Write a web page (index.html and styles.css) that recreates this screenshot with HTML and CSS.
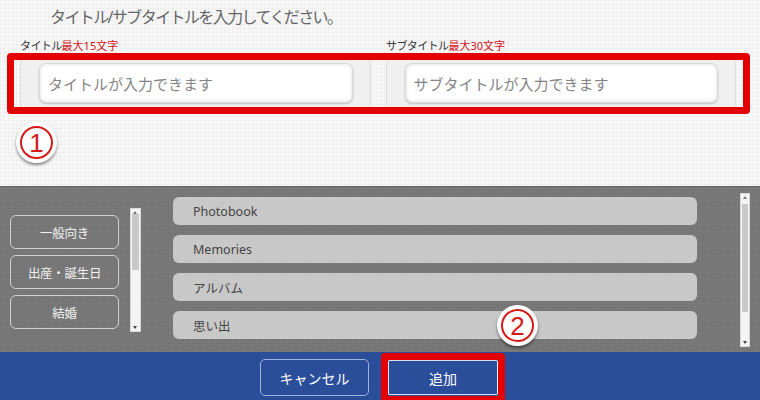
FILE: index.html
```html
<!DOCTYPE html>
<html lang="ja">
<head>
    <meta charset="UTF-8">
    <title>タイトル入力</title>
    <link rel="stylesheet" href="styles.css">
</head>
<body>
    <div class="top">
        <h1 class="heading">タイトル/サブタイトルを入力してください。</h1>
        <div class="labels">
            <p class="label label-first">タイトル<span class="limit">最大15文字</span></p>
            <p class="label">サブタイトル<span class="limit">最大30文字</span></p>
        </div>
        <div class="fields">
            <div class="field-panel">
                <input class="field" type="text" placeholder="タイトルが入力できます">
            </div>
            <div class="field-panel">
                <input class="field" type="text" placeholder="サブタイトルが入力できます">
            </div>
        </div>
        <div class="step step-one"><span class="step-ring">1</span></div>
    </div>

    <div class="picker">
        <div class="categories">
            <div class="category">一般向き</div>
            <div class="category">出産・誕生日</div>
            <div class="category">結婚</div>
        </div>
        <div class="scrollbar scrollbar-left">
            <span class="arrow arrow-up"></span>
            <span class="thumb"></span>
            <span class="arrow arrow-down"></span>
        </div>

        <ul class="titles">
            <li class="title-item">Photobook</li>
            <li class="title-item">Memories</li>
            <li class="title-item">アルバム</li>
            <li class="title-item">思い出</li>
        </ul>
        <div class="scrollbar scrollbar-right">
            <span class="arrow arrow-up"></span>
            <span class="thumb"></span>
            <span class="arrow arrow-down"></span>
        </div>

        <div class="step step-two"><span class="step-ring">2</span></div>
    </div>

    <div class="footer">
        <button class="btn btn-cancel">キャンセル</button>
        <div class="highlight">
            <button class="btn btn-add">追加</button>
        </div>
    </div>
</body>
</html>
```

FILE: styles.css
```css
* {
    margin: 0;
    padding: 0;
    box-sizing: border-box;
}

body {
    width: 760px;
    height: 400px;
    overflow: hidden;
    font-family: "Noto Sans", "Noto Sans CJK JP", sans-serif;
    background: #f6f6f6;
}

/* input area */
.top {
    position: relative;
    height: 186px;
    background-color: #f7f7f7;
    background-image:
        linear-gradient(to right, rgba(0, 0, 0, 0.025) 1px, transparent 1px),
        linear-gradient(to bottom, rgba(0, 0, 0, 0.025) 1px, transparent 1px);
    background-size: 4px 4px;
}

.heading {
    padding: 7px 0 0 50px;
    font-size: 16px;
    line-height: 20px;
    font-weight: normal;
    letter-spacing: -1.6px;
    color: #666;
}

.labels {
    display: flex;
    margin-top: 12px;
    padding-left: 20px;
}

.label {
    font-size: 11px;
    line-height: 14px;
    letter-spacing: -0.6px;
    color: #333;
}

.label-first {
    width: 366px;
}

.limit {
    color: #d3141b;
    letter-spacing: 0;
}

.fields {
    display: flex;
    gap: 15px;
    width: 743px;
    height: 61px;
    margin-left: 7px;
    padding: 0 7px 0 6px;
    border: 7px solid #e20000;
    border-radius: 4px;
}

.field-panel {
    flex: 1;
    padding: 3px 17px 4px 18px;
    background: #f0f0f0;
    border: 1px solid #dcdcdc;
    border-top: none;
    border-bottom: none;
    border-radius: 3px;
}

.field {
    width: 100%;
    height: 100%;
    padding: 0 8px;
    font-family: "Noto Sans CJK JP", sans-serif;
    font-size: 15px;
    color: #333;
    background: #fff;
    border: 1px solid #d8d8d8;
    border-radius: 7px;
    box-shadow: inset 0 0 4px rgba(0, 0, 0, 0.12), 0 1px 2px rgba(0, 0, 0, 0.2);
    outline: none;
}

.field::placeholder {
    color: #858585;
}

/* numbered markers */
.step {
    position: absolute;
    width: 41px;
    height: 41px;
    display: flex;
    align-items: center;
    justify-content: center;
    background: #fff;
    border-radius: 50%;
    box-shadow: 0 2px 3px rgba(0, 0, 0, 0.45);
    z-index: 5;
}

.step-one {
    left: 16px;
    top: 122px;
}

.step-two {
    left: 497px;
    top: 118px;
}

.step-ring {
    width: 33px;
    height: 33px;
    display: flex;
    align-items: center;
    justify-content: center;
    border: 2px solid #d61a1a;
    border-radius: 50%;
    font-family: "Liberation Sans", sans-serif;
    font-size: 26px;
    line-height: 1;
    color: #d61a1a;
}

/* picker */
.picker {
    position: relative;
    display: flex;
    align-items: flex-start;
    height: 166px;
    border-top: 1px solid #666;
    background-color: #7a7a7a;
    background-image:
        linear-gradient(to right, rgba(0, 0, 0, 0.03) 1px, transparent 1px),
        linear-gradient(to bottom, rgba(0, 0, 0, 0.03) 1px, transparent 1px);
    background-size: 3px 3px;
}

.categories {
    display: flex;
    flex-direction: column;
    gap: 6px;
    width: 109px;
    margin: 28px 0 0 10px;
}

.category {
    height: 34px;
    display: flex;
    align-items: center;
    justify-content: center;
    font-family: "Noto Sans CJK JP", sans-serif;
    font-size: 12.5px;
    letter-spacing: -0.3px;
    color: #f0f0f0;
    border: 1px solid #d0d0d0;
    border-radius: 6px;
}

.scrollbar {
    position: relative;
    width: 11px;
    background: #f4f4f4;
    border: 1px solid #d8d8d8;
}

.scrollbar-left {
    height: 124px;
    margin: 21px 0 0 11px;
}

.scrollbar-right {
    height: 154px;
    margin: 6px 0 0 43px;
    width: 10px;
}

.thumb {
    position: absolute;
    left: 1px;
    right: 1px;
    background: #c9c9c9;
}

.scrollbar-left .thumb {
    top: 5px;
    height: 56px;
}

.scrollbar-right .thumb {
    top: 10px;
    height: 108px;
}

.arrow {
    position: absolute;
    left: 2px;
    width: 0;
    height: 0;
    border-left: 2.5px solid transparent;
    border-right: 2.5px solid transparent;
}

.arrow-up {
    top: 2px;
    border-bottom: 3px solid #777;
}

.arrow-down {
    bottom: 2px;
    border-top: 3px solid #444;
}

.titles {
    list-style: none;
    display: flex;
    flex-direction: column;
    gap: 10px;
    width: 524px;
    margin: 10px 0 0 32px;
}

.title-item {
    height: 28px;
    padding-left: 20px;
    display: flex;
    align-items: center;
    font-family: "Noto Sans", "Noto Sans CJK JP", sans-serif;
    font-size: 12.5px;
    color: #444;
    background: #c8c8c8;
    border-radius: 6px;
}

/* footer */
.footer {
    display: flex;
    justify-content: center;
    align-items: flex-start;
    gap: 12px;
    height: 48px;
    padding: 1px 0 0 5px;
    background: #2b4e9b;
}

.btn {
    font-family: "Noto Sans CJK JP", sans-serif;
    font-size: 14px;
    color: #fff;
    background: #2b4e9b;
    border-radius: 5px;
}

.btn-cancel {
    width: 109px;
    height: 37px;
    margin-top: 6px;
    border: 1px solid #9fb4dc;
}

.highlight {
    width: 124px;
    height: 50px;
    border: 7px solid #e20000;
    border-radius: 4px;
}

.btn-add {
    width: 110px;
    height: 35px;
    border: 1px solid #d9e1f2;
    border-right-color: #eef2fa;
    border-radius: 2px;
}
```
